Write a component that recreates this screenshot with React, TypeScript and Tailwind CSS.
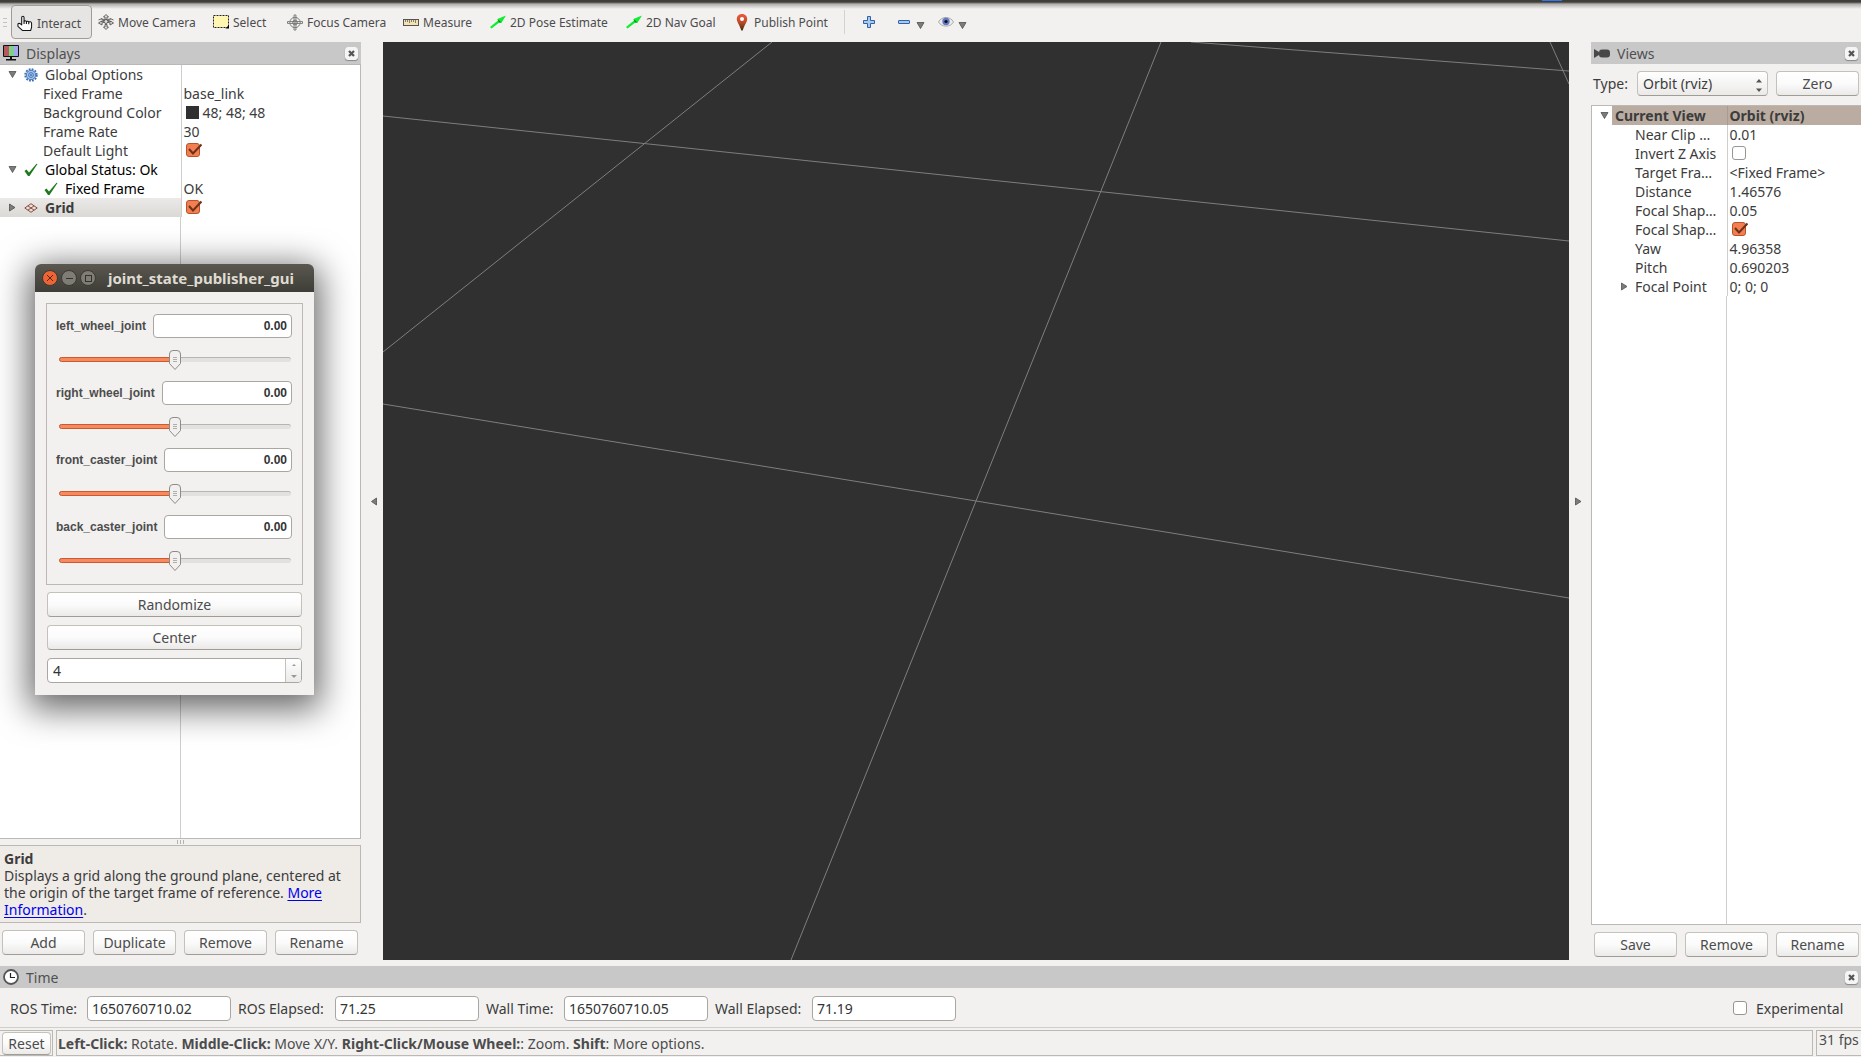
import { useId, useState } from 'react';
import type { ReactNode } from 'react';
import clsx from 'clsx';

interface IProperty {
  name: string;
  value?: string;
  color?: string;
  checked?: boolean;
  arrow?: 'down' | 'right';
  icon?: ReactNode;
  indent: 'root' | 'item' | 'status';
  bold?: boolean;
  selected?: boolean;
  status?: boolean;
}

/* ---------- icons ---------- */

function HandIcon() {
  return (
    <svg width="17" height="17" viewBox="0 0 17 17" fill="#fff" stroke="#111" strokeWidth="1.1" strokeLinejoin="round">
      <path d="M5 10V2.2C5 .3 7.5.3 7.5 2.2V6.5C7.5 5.3 10 5.3 10 6.8 10.2 5.7 12.5 5.9 12.5 7.2 13 6.2 15.5 6.7 15.5 8.2V12.5L14.5 16H6L1 11.5V8.8C2 8 3.5 8.5 5 10Z" />
      <path d="M7.5 6.5V9M10 6.8V9M12.5 7.2V9.3" />
    </svg>
  );
}

function MoveIcon() {
  return (
    <svg width="16" height="16" viewBox="0 0 16 16" fill="#ddd" stroke="#555" strokeWidth="0.9">
      <path d="M8 .5L10.5 3H9V5.5H7V3H5.5ZM8 15.5L10.5 13H9V10.5H7V13H5.5Z" />
      <path d="M.5 6L4 4.5V6L12 9V11L15.5 9 12.5 7V8L4.5 5M15.5 6L12 4.5V6L4 9V11L.5 9 3.5 7V8L11.5 5" />
      <circle cx="8" cy="7.5" r="2" />
    </svg>
  );
}

function SelectIcon() {
  return (
    <svg width="16" height="14" viewBox="0 0 16 14">
      <rect x="0.5" y="0.5" width="15" height="12" fill="#fff6b4" stroke="#222" strokeDasharray="2 1" />
      <path d="M12.5 13.5L16 10V13.5Z" fill="#000" />
    </svg>
  );
}

function FocusIcon() {
  return (
    <svg width="17" height="17" viewBox="0 0 17 17" fill="none" stroke="#777" strokeWidth="1">
      <circle cx="8.5" cy="8.5" r="5.5" />
      <circle cx="8.5" cy="8.5" r="2.5" />
      <path d="M7.5 3V.5H9.5V3M7.5 14V16.5H9.5V14M3 7.5H.5V9.5H3M14 7.5H16.5V9.5H14M7.5 3V14M9.5 3V14M3 7.5H14M3 9.5H14" />
    </svg>
  );
}

function RulerIcon() {
  return (
    <svg width="16" height="7" viewBox="0 0 16 7">
      <rect x="0.5" y="0.5" width="15" height="6" fill="#f2e3ae" stroke="#555" />
      <path d="M2.5 1V3M4.5 1V3M6.5 1V4M8.5 1V3M10.5 1V3M12.5 1V4" stroke="#666" strokeWidth="0.8" />
    </svg>
  );
}

function ArrowIcon() {
  return (
    <svg width="16" height="14" viewBox="0 0 16 14">
      <path d="M0 12L8 5.5 7.5 4 16 .5 11.5 7.8 10 7 1.5 13.5Z" fill="#0bef2c" />
      <path d="M7.5 4L11.5 7.8 9 7.5Z" fill="#067a1a" />
    </svg>
  );
}

function PinIcon() {
  return (
    <svg width="12" height="17" viewBox="0 0 12 17">
      <defs>
        <linearGradient id="pin" x1="0" y1="0" x2="0" y2="1">
          <stop offset="0" stopColor="#ee5a3c" />
          <stop offset="0.5" stopColor="#c04a28" />
          <stop offset="1" stopColor="#3c3010" />
        </linearGradient>
      </defs>
      <path d="M6 0C2.5 0 .8 2.5.8 5.2.8 8 3.5 10.5 5.3 16.5H6.7C8.5 10.5 11.2 8 11.2 5.2 11.2 2.5 9.5 0 6 0Z" fill="url(#pin)" />
      <circle cx="6" cy="5" r="2" fill="#fff" />
    </svg>
  );
}

function PlusIcon() {
  return (
    <svg width="12" height="12" viewBox="0 0 12 12">
      <path d="M4.5.5H7.5V4.5H11.5V7.5H7.5V11.5H4.5V7.5H.5V4.5H4.5Z" fill="#a9c8ee" stroke="#2f63a8" />
    </svg>
  );
}

function MinusIcon() {
  return (
    <svg width="12" height="4" viewBox="0 0 12 4">
      <rect x="0.5" y="0.5" width="11" height="3" rx="0.5" fill="#a9c8ee" stroke="#2f63a8" />
    </svg>
  );
}

function EyeIcon() {
  return (
    <svg width="16" height="12" viewBox="0 0 16 12">
      <path d="M.5 6C3.5 0 12.5 0 15.5 6 12.5 11.5 3.5 11.5.5 6Z" fill="#ececec" stroke="#aaa" />
      <circle cx="8" cy="5.5" r="3.7" fill="#6278c0" />
      <circle cx="8" cy="5.5" r="1.6" fill="#0b0b22" />
    </svg>
  );
}

function MonitorIcon() {
  return (
    <svg width="16" height="16" viewBox="0 0 16 16">
      <rect width="16" height="12" rx="1" fill="#111" />
      <rect x="1" y="1" width="5" height="10" fill="#b45a5c" />
      <rect x="6" y="1" width="5" height="10" fill="#7fd18a" />
      <rect x="11" y="1" width="4" height="10" fill="#a4a8f0" />
      <path d="M7 12H9V14H13V15.5H3V14H7Z" fill="#111" />
    </svg>
  );
}

function CameraIcon() {
  return (
    <svg width="16" height="9" viewBox="0 0 16 9" fill="#484848">
      <path d="M0 0L5 3V6L0 9Z" />
      <rect x="5" y="0.5" width="11" height="8" rx="3" />
    </svg>
  );
}

function ClockIcon() {
  return (
    <svg width="16" height="16" viewBox="0 0 16 16" fill="none">
      <circle cx="8" cy="8" r="7" fill="#fff" stroke="#555" strokeWidth="1.8" />
      <path d="M7.5 4V8.5H12" stroke="#222" strokeWidth="1.2" />
    </svg>
  );
}

function GearIcon() {
  return (
    <svg width="14" height="14" viewBox="0 0 14 14" fill="none">
      <circle cx="7" cy="7" r="5.8" stroke="#3d6fb4" strokeWidth="1.8" strokeDasharray="1.8 1.24" />
      <circle cx="7" cy="7" r="4.7" fill="#a3c3ea" stroke="#3d6fb4" strokeWidth="0.9" />
      <circle cx="7" cy="7" r="2.4" stroke="#3d6fb4" strokeWidth="0.9" />
      <circle cx="7" cy="7" r="0.9" fill="#3d6fb4" />
    </svg>
  );
}

function TickIcon() {
  return (
    <svg width="14" height="14" viewBox="0 0 14 14">
      <path d="M.5 8L2.5 6.5 5 9.5 12.5.8 13.5 1 5.5 13H4Z" fill="#1f7a1f" />
    </svg>
  );
}

function GridIcon() {
  return (
    <svg width="14" height="10" viewBox="0 0 14 10" fill="none" stroke="#8f4a38" strokeWidth="1">
      <path d="M7 .7L13.2 5 7 9.3.8 5ZM3.9 2.85L10.1 7.15M10.1 2.85L3.9 7.15" />
    </svg>
  );
}

function Triangle({ dir }: { dir: 'down' | 'right' | 'left' }) {
  const points = {
    down: '1,1.5 8,1.5 4.5,7.5',
    right: '1.5,1 7,4.5 1.5,8',
    left: '6.5,1 1.5,4.5 6.5,8',
  }[dir];
  return (
    <svg width="9" height="9" viewBox="0 0 9 9" className="shrink-0">
      <polygon points={points} fill="#7c7c7c" stroke="#505050" strokeWidth="0.8" />
    </svg>
  );
}

/* ---------- small controls ---------- */

function Button({ children, className }: { children: ReactNode; className?: string }) {
  return (
    <button
      className={clsx(
        'rounded-[4px] border border-[#c4c0ba] border-b-[#a09c96] bg-linear-to-b from-white via-[#fbfbfb] to-[#ebeae9] text-center text-[#4c4c4c]',
        className ?? 'h-[25px] leading-[23px]'
      )}
    >
      {children}
    </button>
  );
}

function CheckBox({ id, label, initial = false }: { id?: string; label?: string; initial?: boolean }) {
  const [checked, setChecked] = useState(initial);

  return (
    <span className="relative inline-block size-[15px] shrink-0">
      <input
        id={id}
        type="checkbox"
        aria-label={label}
        checked={checked}
        onChange={e => setChecked(e.target.checked)}
        className="block size-[14px] appearance-none rounded-[3px] border border-[#999590] bg-white checked:border-[#b5532e] checked:bg-[#f37f50]"
      />
      {checked && (
        <svg width="16" height="14" viewBox="0 0 16 14" className="pointer-events-none absolute top-0 left-0">
          <path d="M3 6L7 10.5 15.5 1.5" fill="none" stroke="#6d3019" strokeWidth="2" />
        </svg>
      )}
    </span>
  );
}

function DockTitle({ icon, title }: { icon: ReactNode; title: string }) {
  return (
    <div className="flex h-[22px] shrink-0 items-center bg-[#c8c8c8] pr-[3px] pl-[3px]">
      <span className="flex w-[23px] items-center">{icon}</span>
      <h2 className="grow text-[#505050]">{title}</h2>
      <button
        aria-label={`Close ${title}`}
        className="flex size-[13px] items-center justify-center rounded-[3px] border border-[#f5f5f5] bg-[#f5f5f5] shadow-[0_1px_1px_#888]"
      >
        <svg width="7" height="7" viewBox="0 0 7 7">
          <path d="M1 1L6 6M6 1L1 6" stroke="#555" strokeWidth="2.2" />
        </svg>
      </button>
    </div>
  );
}

/* ---------- toolbar ---------- */

const tools = [
  { label: 'Interact', icon: <HandIcon />, width: 'w-[81px]', active: true },
  { label: 'Move Camera', icon: <MoveIcon />, width: 'w-[115px]' },
  { label: 'Select', icon: <SelectIcon />, width: 'w-[74px]' },
  { label: 'Focus Camera', icon: <FocusIcon />, width: 'w-[116px]' },
  { label: 'Measure', icon: <RulerIcon />, width: 'w-[87px]' },
  { label: '2D Pose Estimate', icon: <ArrowIcon />, width: 'w-[136px]' },
  { label: '2D Nav Goal', icon: <ArrowIcon />, width: 'w-[108px]' },
  { label: 'Publish Point', icon: <PinIcon />, width: 'w-[112px]' },
];

function Toolbar() {
  return (
    <header className="flex h-[42px] shrink-0 items-start bg-linear-to-b from-[#3f3e38] from-[2px] via-[#b0afac] via-[4px] to-[#f2f1f0] to-[9px] pt-[5px]">
      <div className="flex h-[34px] w-[11px] flex-col justify-center gap-[3px] pl-[3px]">
        <i className="h-px w-[4px] bg-[#c4c2be]" />
        <i className="h-px w-[4px] bg-[#c4c2be]" />
        <i className="h-px w-[4px] bg-[#c4c2be]" />
      </div>
      {tools.map(tool => (
        <button
          key={tool.label}
          className={clsx(
            'flex h-[34px] shrink-0 items-center gap-1 rounded-[4px] border pl-[5px] text-[12px] whitespace-nowrap text-[#4c4c4c]',
            tool.width,
            tool.active ? 'border-[#a09d98] bg-[#e6e5e3] pt-[2px]' : 'border-transparent'
          )}
        >
          <span className="flex w-4 shrink-0 justify-center">{tool.icon}</span>
          {tool.label}
        </button>
      ))}
      <i className="mt-[5px] mr-[18px] ml-[4px] h-6 w-px bg-[#d4d2cf]" />
      <button aria-label="Add tool" className="mr-[23px] flex h-[34px] items-center">
        <PlusIcon />
      </button>
      <button aria-label="Remove tool" className="mr-[13px] flex h-[34px] items-center gap-[6px]">
        <MinusIcon />
        <span className="pt-[6px]"><Triangle dir="down" /></span>
      </button>
      <button aria-label="Tool visibility" className="flex h-[34px] items-center gap-[4px]">
        <EyeIcon />
        <span className="pt-[6px]"><Triangle dir="down" /></span>
      </button>
    </header>
  );
}

/* ---------- property trees ---------- */

const displayProps: IProperty[] = [
  { name: 'Global Options', indent: 'root', arrow: 'down', icon: <GearIcon /> },
  { name: 'Fixed Frame', value: 'base_link', indent: 'item' },
  { name: 'Background Color', value: '48; 48; 48', color: '#303030', indent: 'item' },
  { name: 'Frame Rate', value: '30', indent: 'item' },
  { name: 'Default Light', checked: true, indent: 'item' },
  { name: 'Global Status: Ok', indent: 'root', arrow: 'down', icon: <TickIcon />, status: true },
  { name: 'Fixed Frame', value: 'OK', indent: 'status', icon: <TickIcon />, status: true },
  { name: 'Grid', checked: true, indent: 'root', arrow: 'right', icon: <GridIcon />, bold: true, selected: true },
];

function DisplayTree() {
  return (
    <div className="flex min-h-0 grow flex-col border-t border-r border-b border-[#bcb9b4] bg-white">
      <table className="w-full table-fixed border-collapse">
        <colgroup>
          <col className="w-[181px]" />
          <col />
        </colgroup>
        <tbody>
          {displayProps.map((prop, i) => (
            <tr key={i} className="h-[19px]">
              <td
                className={clsx(
                  'h-[19px] border-r border-[#d0ceca] p-0',
                  prop.selected && 'bg-linear-to-b from-[#ebeae8] to-[#dbd9d6]'
                )}
              >
                <div className={clsx('flex h-[19px] items-center', prop.status ? 'text-black' : 'text-[#3c3c3c]', prop.bold && 'font-bold')}>
                  {prop.indent === 'root' && (
                    <span className="flex w-6 shrink-0 pl-2">{prop.arrow && <Triangle dir={prop.arrow} />}</span>
                  )}
                  {prop.indent === 'item' && <span className="w-[43px] shrink-0" />}
                  {prop.indent === 'status' && <span className="w-11 shrink-0" />}
                  {prop.icon && <span className="flex w-[21px] shrink-0">{prop.icon}</span>}
                  <span className="whitespace-nowrap">{prop.name}</span>
                </div>
              </td>
              <td className="h-[19px] p-0">
                <div className="flex h-[19px] items-center pl-[2px]">
                  {prop.color && <i className="mr-[4px] ml-[2px] size-[13px]" style={{ backgroundColor: prop.color }} />}
                  {prop.checked !== undefined && (
                    <span className="flex pl-[2px]">
                      <CheckBox label={prop.name} initial={prop.checked} />
                    </span>
                  )}
                  {prop.value}
                </div>
              </td>
            </tr>
          ))}
        </tbody>
      </table>
      <div className="w-[181px] grow border-r border-[#d0ceca]" />
    </div>
  );
}

const viewProps = [
  { name: 'Near Clip …', value: '0.01' },
  { name: 'Invert Z Axis', checked: false },
  { name: 'Target Fra…', value: '<Fixed Frame>' },
  { name: 'Distance', value: '1.46576' },
  { name: 'Focal Shap…', value: '0.05' },
  { name: 'Focal Shap…', checked: true },
  { name: 'Yaw', value: '4.96358' },
  { name: 'Pitch', value: '0.690203' },
  { name: 'Focal Point', value: '0; 0; 0', arrow: true },
];

function ViewTree() {
  return (
    <div className="flex min-h-0 grow flex-col border-t border-b border-l border-[#bcb9b4] bg-white">
      <table className="w-full table-fixed border-collapse">
        <colgroup>
          <col className="w-[135px]" />
          <col />
        </colgroup>
        <tbody>
          <tr className="h-[19px] font-bold">
            <td className="h-[19px] border-r border-[#a89b90] p-0">
              <div className="flex h-[19px] items-center">
                <span className="flex w-[20px] shrink-0 pl-2"><Triangle dir="down" /></span>
                <span className="grow bg-[#baaca1] pl-[3px] leading-[19px]">Current View</span>
              </div>
            </td>
            <td className="h-[19px] bg-[#baaca1] p-0 pl-[2px]">Orbit (rviz)</td>
          </tr>
          {viewProps.map((prop, i) => (
            <tr key={i} className="h-[19px]">
              <td className="h-[19px] border-r border-[#d0ceca] p-0">
                <div className="flex h-[19px] items-center">
                  <span className="flex w-[43px] shrink-0 pl-[28px]">{prop.arrow && <Triangle dir="right" />}</span>
                  <span className="whitespace-nowrap">{prop.name}</span>
                </div>
              </td>
              <td className="h-[19px] p-0">
                <div className="flex h-[19px] items-center pl-[2px]">
                  {prop.checked !== undefined && (
                    <span className="flex pl-[2px]">
                      <CheckBox label={prop.name} initial={prop.checked} />
                    </span>
                  )}
                  {prop.value}
                </div>
              </td>
            </tr>
          ))}
        </tbody>
      </table>
      <div className="w-[135px] grow border-r border-[#d0ceca]" />
    </div>
  );
}

/* ---------- docks ---------- */

function DisplaysDock() {
  return (
    <aside className="flex w-[361px] shrink-0 flex-col">
      <DockTitle icon={<MonitorIcon />} title="Displays" />
      <DisplayTree />
      <div className="flex h-[6px] shrink-0 items-center justify-center gap-[2px]">
        <i className="h-1 w-px bg-[#b5b2ad]" />
        <i className="h-1 w-px bg-[#b5b2ad]" />
        <i className="h-1 w-px bg-[#b5b2ad]" />
      </div>
      <div className="h-[78px] shrink-0 border border-l-0 border-[#bcb9b4] bg-[#efebe7] pt-[4px] pl-[4px] leading-[17px]">
        <p className="font-bold">Grid</p>
        <p>
          Displays a grid along the ground plane, centered at the origin of the target frame of reference.{' '}
          <a href="#grid" className="text-[#0000ee] underline underline-offset-2">More Information</a>.
        </p>
      </div>
      <div className="mt-[7px] mb-[11px] grid shrink-0 grid-cols-4 gap-2 pr-[3px] pl-[2px]">
        <Button>Add</Button>
        <Button>Duplicate</Button>
        <Button>Remove</Button>
        <Button>Rename</Button>
      </div>
    </aside>
  );
}

function ViewsDock() {
  return (
    <aside className="flex w-[270px] shrink-0 flex-col">
      <DockTitle icon={<CameraIcon />} title="Views" />
      <div className="mt-[7px] mb-[9px] flex shrink-0 items-center pr-[2px] pl-[2px]">
        <label htmlFor="view-type" className="w-[44px]">Type:</label>
        <div className="relative mr-2 w-[131px]">
          <select
            id="view-type"
            className="h-[25px] w-full appearance-none rounded-[4px] border border-[#c4c0ba] border-b-[#a09c96] bg-linear-to-b from-white to-[#ebeae9] pl-[5px] leading-[22px]"
          >
            <option>Orbit (rviz)</option>
            <option>TopDownOrtho (rviz)</option>
          </select>
          <svg width="6" height="13" viewBox="0 0 6 13" fill="#555" className="pointer-events-none absolute top-[8px] right-[6px]">
            <path d="M0 3.5L3 0 6 3.5ZM0 9.5L3 13 6 9.5Z" />
          </svg>
        </div>
        <Button className="h-[25px] grow leading-[23px]">Zero</Button>
      </div>
      <ViewTree />
      <div className="mt-[7px] mb-[9px] grid shrink-0 grid-cols-3 gap-2 pr-[2px] pl-[3px]">
        <Button>Save</Button>
        <Button>Remove</Button>
        <Button>Rename</Button>
      </div>
    </aside>
  );
}

// end points of the visible ground grid lines
const gridLines = [
  [389, 0, 0, 310],
  [0, 74, 1186, 199],
  [778, 0, 408, 918],
  [0, 362, 1186, 556],
  [808, 0, 1186, 29],
  [1167, 0, 1186, 42],
];

function Viewport() {
  return (
    <main className="mb-[6px] min-w-0 grow bg-[#303030]">
      <svg viewBox="0 0 1186 918" preserveAspectRatio="none" className="block size-full">
        {gridLines.map(([x1, y1, x2, y2]) => (
          <line key={`${x1}-${y1}`} x1={x1} y1={y1} x2={x2} y2={y2} stroke="#7e7e7e" strokeWidth="1" vectorEffect="non-scaling-stroke" />
        ))}
      </svg>
    </main>
  );
}

/* ---------- time panel and status bar ---------- */

const clocks = [
  { label: 'ROS Time:', value: '1650760710.02', width: 'w-[69px]' },
  { label: 'ROS Elapsed:', value: '71.25', width: 'w-[89px]' },
  { label: 'Wall Time:', value: '1650760710.05', width: 'w-[70px]' },
  { label: 'Wall Elapsed:', value: '71.19', width: 'w-[89px]' },
];

function TimePanel() {
  return (
    <section className="shrink-0">
      <DockTitle icon={<ClockIcon />} title="Time" />
      <div className="flex h-[40px] items-center gap-[7px] border-b border-[#d0ceca] pt-px pr-[15px] pl-[10px]">
        {clocks.map(clock => {
          const id = clock.label.toLowerCase().replace(/\W+/g, '-');
          return (
            <div key={id} className="flex items-center gap-2">
              <label htmlFor={id} className={clsx('whitespace-nowrap', clock.width)}>{clock.label}</label>
              <input
                id={id}
                readOnly
                value={clock.value}
                className="h-[25px] w-36 rounded-[4px] border border-[#aaa6a0] bg-white pl-[4px] text-[#333]"
              />
            </div>
          );
        })}
        <div className="ml-auto flex items-center gap-2">
          <CheckBox id="experimental" />
          <label htmlFor="experimental" className="w-[90px]">Experimental</label>
        </div>
      </div>
    </section>
  );
}

function StatusBar() {
  return (
    <footer className="flex h-[29px] shrink-0 gap-[3px] pt-[2px] pb-px text-[#4c4c4c]">
      <div className="flex w-[53px] shrink-0 items-start border border-l-0 border-[#bcb9b4] pt-px pl-[2px]">
        <Button className="h-[23px] w-[49px] leading-[21px]">Reset</Button>
      </div>
      <p className="grow border border-[#bcb9b4] pl-px leading-[25px]">
        <b>Left-Click:</b> Rotate. <b>Middle-Click:</b> Move X/Y. <b>Right-Click/Mouse Wheel:</b>: Zoom. <b>Shift</b>: More options.
      </p>
      <p className="w-[45px] shrink-0 border border-r-0 border-[#bcb9b4] pl-[2px] leading-[18px] whitespace-nowrap">31 fps</p>
    </footer>
  );
}

/* ---------- joint state publisher window ---------- */

const joints = ['left_wheel_joint', 'right_wheel_joint', 'front_caster_joint', 'back_caster_joint'];

function JointSlider({ name }: { name: string }) {
  const id = useId();
  const [value, setValue] = useState(0);
  const percent = ((value + 314) / 628) * 100;

  return (
    <div className="h-[67px]">
      <div className="flex items-center gap-[7px] font-['Liberation_Sans',Arial,sans-serif] text-[12px] font-bold text-[#4c4c4c]">
        <label htmlFor={id}>{name}</label>
        <input
          readOnly
          aria-label={`${name} position`}
          value={(value / 100).toFixed(2)}
          className="h-6 w-0 min-w-0 grow rounded-[4px] border border-[#aaa6a0] bg-white pr-[4px] text-right text-[#333]"
        />
      </div>
      <div className="relative mt-[12px] mr-px ml-[3px] h-5">
        <div className="absolute top-[7px] h-[5px] w-full rounded-full border-t border-[#b8b5b0] bg-[#e2e1df]" />
        <div
          className="absolute top-[7px] h-[5px] rounded-full border border-[#d0592c] bg-[#f58a60]"
          style={{ width: `${percent}%` }}
        />
        <svg width="12" height="20" viewBox="0 0 12 20" className="absolute top-0 -translate-x-1/2" style={{ left: `${percent}%` }}>
          <path d="M.5 4Q.5.5 4 .5H8Q11.5.5 11.5 4V13.5L6 19.5.5 13.5Z" fill="#f1f0ee" stroke="#8e8b86" />
          <path d="M4 7.5H8M4 9.5H8M4 11.5H8" stroke="#b0aeaa" />
        </svg>
        <input
          id={id}
          type="range"
          min={-314}
          max={314}
          value={value}
          onChange={e => setValue(Number(e.target.value))}
          className="absolute inset-0 w-full opacity-0"
        />
      </div>
    </div>
  );
}

function JointWindow() {
  const [count, setCount] = useState('4');

  return (
    <section className="absolute top-[264px] left-[35px] w-[279px] rounded-t-[6px] bg-[#f2f1f0] shadow-[0_8px_34px_6px_rgba(0,0,0,0.6)]">
      <div className="flex h-7 items-center gap-[3px] rounded-t-[6px] bg-linear-to-b from-[#5a584f] to-[#3e3d37] pl-[7px] text-[#dfdbd2]">
        <button aria-label="Close" className="flex size-4 items-center justify-center rounded-full border border-[#3a3933] bg-[#ee6535]">
          <svg width="6" height="6" viewBox="0 0 6 6" stroke="#5c2410"><path d="M0 0L6 6M6 0L0 6" /></svg>
        </button>
        <button aria-label="Minimize" className="flex size-4 items-center justify-center rounded-full border border-[#3a3933] bg-[#7e7c75]">
          <i className="h-px w-[7px] bg-[#33322d]" />
        </button>
        <button aria-label="Maximize" className="flex size-4 items-center justify-center rounded-full border border-[#3a3933] bg-[#7e7c75]">
          <i className="size-[7px] border border-[#33322d]" />
        </button>
        <h1 className="pl-[9px] text-[15px] font-bold">joint_state_publisher_gui</h1>
      </div>
      <div className="px-[11px] pt-[11px] pb-[12px]">
        <div className="border border-[#bcb9b4] pt-[10px] pr-[10px] pb-[2px] pl-[9px]">
          {joints.map(name => (
            <JointSlider key={name} name={name} />
          ))}
        </div>
        <div className="mt-[7px] flex flex-col gap-2 px-px">
          <Button>Randomize</Button>
          <Button>Center</Button>
          <div className="flex h-[25px] overflow-hidden rounded-[4px] border border-[#aaa6a0] bg-white">
            <input
              aria-label="Number of rows"
              value={count}
              onChange={e => setCount(e.target.value)}
              className="w-0 grow pl-[5px] text-[#333]"
            />
            <div className="flex w-4 flex-col border-l border-[#c4c0ba] bg-linear-to-b from-white to-[#ebeae9]">
              <button aria-label="Increase" className="flex h-3 items-center justify-center">
                <svg width="4" height="2" viewBox="0 0 4 2" fill="#999"><path d="M0 2L2 0 4 2Z" /></svg>
              </button>
              <button aria-label="Decrease" className="flex h-3 items-center justify-center">
                <svg width="6" height="3" viewBox="0 0 6 3" fill="#999"><path d="M0 0H6L3 3Z" /></svg>
              </button>
            </div>
          </div>
        </div>
      </div>
    </section>
  );
}

function App() {
  return (
    <div className="relative flex h-screen flex-col overflow-hidden bg-[#f2f1f0] font-['Noto_Sans',sans-serif] text-[14px] leading-[19px] text-[#3c3c3c]">
      <Toolbar />
      <div className="flex min-h-0 grow">
        <DisplaysDock />
        <button aria-label="Hide left dock" className="flex w-[22px] shrink-0 items-center justify-end pr-[4px] pb-[6px]">
          <Triangle dir="left" />
        </button>
        <Viewport />
        <button aria-label="Hide right dock" className="flex w-[22px] shrink-0 items-center pb-[6px] pl-[5px]">
          <Triangle dir="right" />
        </button>
        <ViewsDock />
      </div>
      <TimePanel />
      <StatusBar />
      <i className="absolute top-0 right-[299px] h-px w-[20px] bg-[#3574f0]" />
      <JointWindow />
    </div>
  );
}

export default App;
